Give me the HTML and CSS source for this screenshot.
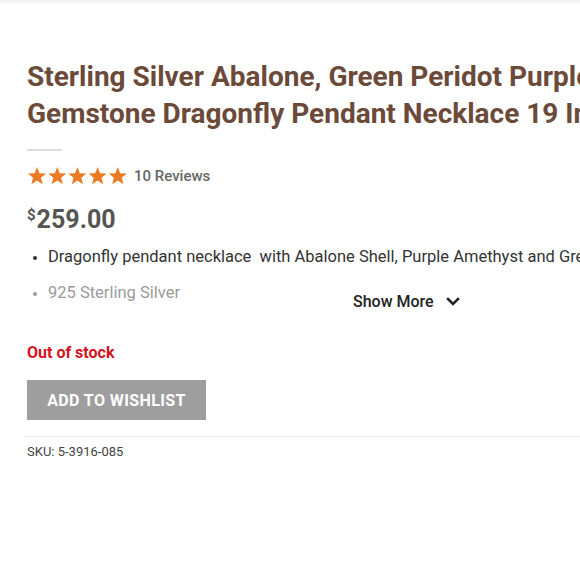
FILE: index.html
```html
<!DOCTYPE html>
<html>
<head>
<meta charset="utf-8">
<link rel="stylesheet" href="styles.css">
</head>
<body>
<div class="topbar"></div>
<main class="product">
  <h1 class="title">Sterling Silver Abalone, Green Peridot Purple Amethyst Gemstone Dragonfly Pendant Necklace 19 Inch</h1>
  <div class="rule-short"></div>
  <div class="rating">
    <span class="stars">
      <svg viewBox="0 0 100 20" width="100" height="20">
        <g fill="#ec7a24">
          <polygon points="10,1 12.4,7.2 19,7.6 13.9,11.8 15.6,18.3 10,14.6 4.4,18.3 6.1,11.8 1,7.6 7.6,7.2"/>
          <polygon transform="translate(20.2,0)" points="10,1 12.4,7.2 19,7.6 13.9,11.8 15.6,18.3 10,14.6 4.4,18.3 6.1,11.8 1,7.6 7.6,7.2"/>
          <polygon transform="translate(40.4,0)" points="10,1 12.4,7.2 19,7.6 13.9,11.8 15.6,18.3 10,14.6 4.4,18.3 6.1,11.8 1,7.6 7.6,7.2"/>
          <polygon transform="translate(60.6,0)" points="10,1 12.4,7.2 19,7.6 13.9,11.8 15.6,18.3 10,14.6 4.4,18.3 6.1,11.8 1,7.6 7.6,7.2"/>
          <polygon transform="translate(80.8,0)" points="10,1 12.4,7.2 19,7.6 13.9,11.8 15.6,18.3 10,14.6 4.4,18.3 6.1,11.8 1,7.6 7.6,7.2"/>
        </g>
      </svg>
    </span>
    <span class="reviews">10 Reviews</span>
  </div>
  <div class="price"><span class="cur">$</span>259.00</div>
  <div class="desc">
    <ul class="features">
      <li>Dragonfly pendant necklace &nbsp;with Abalone Shell, Purple Amethyst and Green Peridot Gemstones</li>
      <li class="faded">925 Sterling Silver</li>
    </ul>
    <div class="showmore">Show More
      <svg viewBox="0 0 14 10" width="14" height="10"><path d="M2 2 L7 7 L12 2" fill="none" stroke="#222" stroke-width="2.6" stroke-linecap="square"/></svg>
    </div>
  </div>
  <div class="stock">Out of stock</div>
  <button class="wishlist">ADD TO WISHLIST</button>
  <div class="rule-long"></div>
  <div class="sku">SKU: 5-3916-085</div>
</main>
</body>
</html>
```

FILE: styles.css
```css
html, body {
  margin: 0;
  padding: 0;
  background: #fff;
  overflow: hidden;
}
body {
  font-family: Roboto, "Liberation Sans", sans-serif;
  width: 580px;
  height: 580px;
}
.topbar {
  height: 6px;
  background: linear-gradient(#efefef, #fafafa 60%, #fff);
}
.product {
  padding: 52px 0 0 27px;
  width: 800px;
}
.title {
  margin: 0;
  font-size: 28px;
  line-height: 37px;
  font-weight: 700;
  color: #6b4a3a;
  width: 700px;
}
.rule-short {
  width: 35px;
  height: 2px;
  background: #dcdcdc;
  margin-top: 17px;
}
.rating {
  display: flex;
  align-items: center;
  gap: 7px;
  margin-top: 15px;
  height: 20px;
}
.stars svg { display: block; }
.reviews {
  font-size: 15px;
  color: #666;
  font-weight: 500;
}
.price {
  margin-top: 14px;
  font-size: 25px;
  font-weight: 700;
  color: #555;
  line-height: 30px;
}
.price .cur {
  font-size: 15px;
  vertical-align: 8px;
  margin-right: 1px;
}
.desc {
  position: relative;
  margin-top: 12px;
  height: 86px;
}
.features {
  margin: 0;
  padding: 0 0 0 21px;
  font-size: 16.5px;
  color: #333;
  line-height: 20px;
  white-space: nowrap;
}
.features li { margin-bottom: 16px; }
.features li::marker { font-size: 13px; }
.features li.faded { color: #9a9a9a; }
.showmore {
  position: absolute;
  left: 326px;
  top: 45px;
  font-size: 16px;
  font-weight: 500;
  color: #222;
  display: flex;
  align-items: center;
  gap: 12px;
  background: rgba(255,255,255,0.6);
}
.showmore svg { display: block; margin-top: 1px; }
.stock {
  margin-top: 10px;
  font-size: 16px;
  font-weight: 700;
  color: #d3121d;
  line-height: 20px;
}
.wishlist {
  display: block;
  margin-top: 17px;
  width: 179px;
  height: 40px;
  border: 0;
  background: #9e9e9e;
  color: #fff;
  font-family: Roboto, "Liberation Sans", sans-serif;
  font-size: 16px;
  font-weight: 700;
  letter-spacing: 0.4px;
  padding: 0;
}
.rule-long {
  height: 1px;
  background: #ececec;
  margin: 16px 0 0 -3px;
}
.sku {
  margin-top: 6px;
  font-size: 13px;
  color: #444;
  line-height: 18px;
}
```
